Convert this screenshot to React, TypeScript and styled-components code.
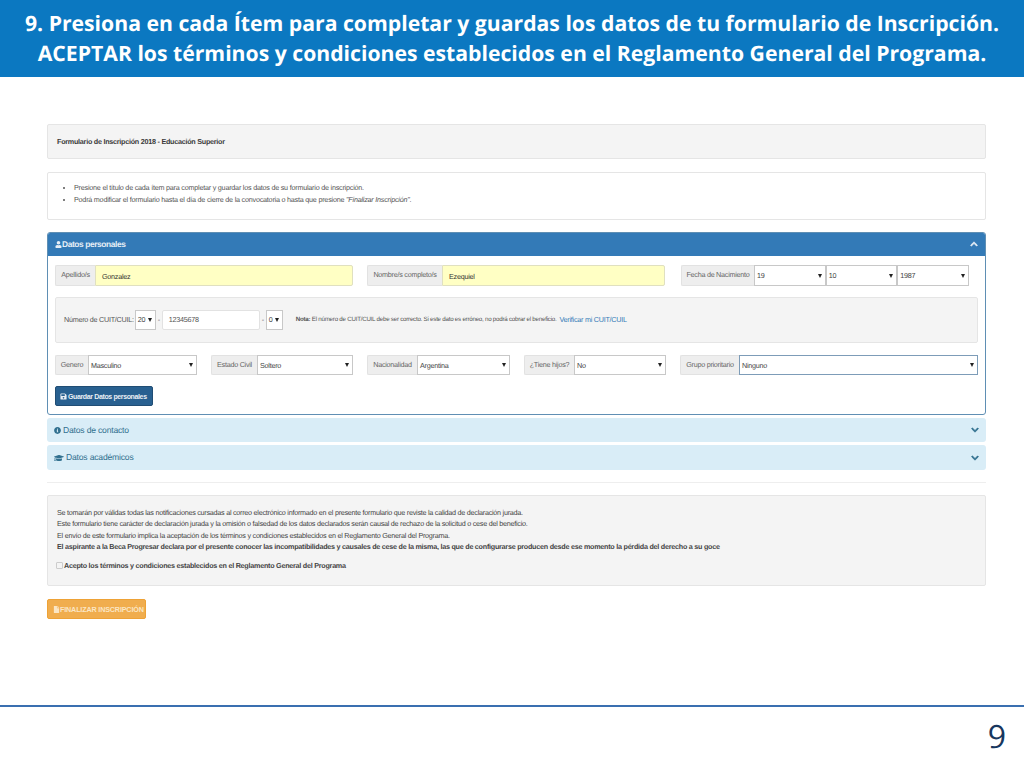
import React from "react";
import styled, { createGlobalStyle } from "styled-components";
import { FaUser, FaInfoCircle, FaGraduationCap, FaChevronUp, FaChevronDown, FaSave, FaFile } from "react-icons/fa";

const GlobalStyle = createGlobalStyle`
  html, body {
    margin: 0;
    padding: 0;
    background: #fff;
    font-family: "Liberation Sans", Arial, sans-serif;
    text-rendering: geometricPrecision;
  }
`;

const Slide = styled.div`
  width: 1024px;
  height: 768px;
  display: flex;
  flex-direction: column;
  overflow: hidden;
  background: #fff;
`;

const Banner = styled.header`
  flex: none;
  height: 77px;
  background: #0b78c1;
  color: #fff;
  font-family: "Open Sans", sans-serif;
  font-weight: 700;
  font-size: 21.2px;
  line-height: 30px;
  text-align: center;
  padding-top: 9px;
  box-sizing: border-box;
  white-space: nowrap;
`;

const Page = styled.main`
  flex: 1;
  padding: 47px 38px 0 47px;
  color: #444;
  font-size: 7.2px;
  letter-spacing: -0.25px;
  line-height: 11px;
`;

const Well = styled.div<{ $h: number; $mb: number; $plain?: boolean }>`
  height: ${({ $h }) => $h}px;
  margin-bottom: ${({ $mb }) => $mb}px;
  box-sizing: border-box;
  background: ${({ $plain }) => ($plain ? "#fff" : "#f4f4f4")};
  border: 1px solid #e5e5e5;
  border-radius: 2px;
`;

const TitleWell = styled(Well)`
  display: flex;
  align-items: center;
  padding-left: 9px;
  font-weight: 700;
  color: #3a3a3a;
`;

const NoteList = styled.ul`
  margin: 0;
  padding: 9px 0 0 26px;
  color: #555;
  letter-spacing: -0.22px;
  line-height: 11.5px;
`;

const Panel = styled.section`
  height: 183px;
  box-sizing: border-box;
  border: 1px solid #5f8fb4;
  border-radius: 3px;
  margin: -1px 0 3px;
  overflow: hidden;
`;

const PanelHead = styled.div`
  height: 23px;
  background: #337ab7;
  color: #e6eef6;
  display: flex;
  align-items: center;
  justify-content: space-between;
  padding: 0 7px 1px 7px;
  box-sizing: border-box;
  font-size: 8.4px;
  letter-spacing: -0.4px;
  font-weight: 700;
`;

const HeadLabel = styled.span<{ $gap?: number }>`
  display: flex;
  align-items: center;
  gap: ${({ $gap }) => $gap ?? 2}px;
  white-space: nowrap;
`;

const PanelBody = styled.div`
  padding: 9px 7px 0;
`;

const FieldRow = styled.div<{ $cols: string; $mb: number }>`
  display: grid;
  grid-template-columns: ${({ $cols }) => $cols};
  column-gap: 14px;
  margin-bottom: ${({ $mb }) => $mb}px;
`;

const Group = styled.div<{ $h: number; $mr?: number }>`
  display: flex;
  height: ${({ $h }) => $h}px;
  margin-right: ${({ $mr }) => $mr ?? 0}px;
  min-width: 0;
`;

const Addon = styled.span<{ $w: number }>`
  flex: none;
  width: ${({ $w }) => $w}px;
  box-sizing: border-box;
  background: #eee;
  border: 1px solid #e2e2e2;
  border-right: 0;
  border-radius: 2px 0 0 2px;
  color: #666;
  white-space: nowrap;
  display: flex;
  align-items: center;
  justify-content: center;
  padding-bottom: 2px;
`;

const YellowInput = styled.div`
  flex: 1;
  box-sizing: border-box;
  background: #ffffc4;
  border: 1px solid #e0e0c0;
  border-radius: 0 2px 2px 0;
  color: #333;
  display: flex;
  align-items: center;
  padding: 2px 0 0 6px;
`;

const SelectBox = styled.div<{ $focus?: boolean }>`
  flex: 1;
  min-width: 0;
  height: 100%;
  box-sizing: border-box;
  background: #fff;
  border: 1px solid ${({ $focus }) => ($focus ? "#7d9cb8" : "#c8c8c8")};
  display: flex;
  align-items: center;
  justify-content: space-between;
  padding: 0 3px 0 2px;
  color: #444;
`;

const Caret = styled.span`
  flex: none;
  width: 0;
  height: 0;
  border-left: 2px solid transparent;
  border-right: 2px solid transparent;
  border-top: 4px solid #222;
`;

const CuitWell = styled(Well)`
  display: flex;
  align-items: center;
  padding: 0 0 1px 8px;
  color: #555;
`;

const CuitLabel = styled.span`
  margin-right: 1px;
  white-space: nowrap;
`;

const Small = styled.div<{ $w: number }>`
  width: ${({ $w }) => $w}px;
  height: 20px;
  display: flex;
`;

const Dash = styled.span`
  width: 6px;
  text-align: center;
`;

const TextBox = styled.div`
  width: 98px;
  height: 20px;
  box-sizing: border-box;
  background: #fff;
  border: 1px solid #e2e2e2;
  border-radius: 2px;
  padding-left: 6px;
  display: flex;
  align-items: center;
  color: #555;
`;

const Note = styled.span`
  margin-left: 13px;
  font-size: 6.2px;
  letter-spacing: -0.24px;
  color: #555;
  white-space: nowrap;
`;

const VerifyLink = styled.span`
  color: #337ab7;
  margin-left: 3px;
  white-space: nowrap;
`;

const SaveButton = styled.button`
  display: flex;
  align-items: center;
  gap: 1px;
  width: 98px;
  height: 20px;
  padding: 0 0 0 4px;
  background: #286090;
  border: 1px solid #204d74;
  border-radius: 2px;
  color: #e8eef4;
  font-family: inherit;
  font-size: 7px;
  letter-spacing: -0.37px;
  font-weight: 700;
  white-space: nowrap;
`;

const Collapsed = styled.div<{ $h: number }>`
  height: ${({ $h }) => $h}px;
  margin-bottom: 3px;
  background: #d9edf7;
  border-radius: 3px;
  color: #31708f;
  display: flex;
  align-items: center;
  justify-content: space-between;
  padding: 0 7px;
  box-sizing: border-box;
  font-size: 8.6px;
  letter-spacing: -0.2px;
`;

const Rule = styled.hr`
  border: 0;
  border-top: 1px solid #eee;
  margin: 12px 0 12px;
`;

const TermsWell = styled(Well)`
  padding: 11px 9px 0;
  line-height: 11.3px;
  color: #444;
`;

const Strong = styled.div`
  font-weight: 700;
`;

const CheckRow = styled.label`
  display: flex;
  align-items: center;
  gap: 1px;
  margin: 8px 0 0 -1px;
  font-weight: 700;
`;

const Check = styled.span`
  width: 5px;
  height: 5px;
  background: #f4f4f4;
  border: 1px solid #ccc;
  border-radius: 1px;
`;

const FinishButton = styled.button`
  display: flex;
  align-items: center;
  width: 99px;
  height: 20px;
  margin-top: 13px;
  padding: 0 0 0 5px;
  background: #f0ad4e;
  border: 1px solid #eea236;
  border-radius: 2px;
  color: #fbe6c4;
  font-family: inherit;
  font-size: 7.2px;
  letter-spacing: -0.16px;
  font-weight: 700;
  white-space: nowrap;

  svg {
    flex: none;
  }
`;

const Footer = styled.footer`
  flex: none;
  height: 63px;
  border-top: 2px solid #3a6fb0;
  box-sizing: border-box;
  display: flex;
  justify-content: flex-end;
  padding: 8px 18px 0 0;
  font-family: "Open Sans", sans-serif;
  font-size: 32px;
  line-height: 44px;
  color: #17375e;
`;

const Dropdown = ({ value, focus }: { value: string; focus?: boolean }) => (
  <SelectBox $focus={focus}>
    {value}
    <Caret />
  </SelectBox>
);

export default function App() {
  return (
    <Slide>
      <GlobalStyle />
      <Banner>
        9. Presiona en cada Ítem para completar y guardas los datos de tu formulario de Inscripción.
        <br />
        ACEPTAR los términos y condiciones establecidos en el Reglamento General del Programa.
      </Banner>
      <Page>
        <TitleWell $h={35} $mb={13}>Formulario de Inscripción 2018 - Educación Superior</TitleWell>
        <Well $h={48} $mb={13} $plain>
          <NoteList>
            <li>Presione el título de cada ítem para completar y guardar los datos de su formulario de inscripción.</li>
            <li>
              Podrá modificar el formulario hasta el día de cierre de la convocatoria o hasta que presione <em>"Finalizar Inscripción"</em>.
            </li>
          </NoteList>
        </Well>
        <Panel>
          <PanelHead>
            <HeadLabel $gap={0}><FaUser size={7} />Datos personales</HeadLabel>
            <FaChevronUp size={8} stroke="currentColor" strokeWidth={40} />
          </PanelHead>
          <PanelBody>
            <FieldRow $cols="298px 300px 288px" $mb={11}>
              <Group $h={21}>
                <Addon $w={40}>Apellido/s</Addon>
                <YellowInput>Gonzalez</YellowInput>
              </Group>
              <Group $h={21} $mr={2}>
                <Addon $w={75}>Nombre/s completo/s</Addon>
                <YellowInput>Ezequiel</YellowInput>
              </Group>
              <Group $h={21}>
                <Addon $w={73}>Fecha de Nacimiento</Addon>
                <Dropdown value="19" />
                <Dropdown value="10" />
                <Dropdown value="1987" />
              </Group>
            </FieldRow>
            <CuitWell $h={46} $mb={12}>
              <CuitLabel>Número de CUIT/CUIL:</CuitLabel>
              <Small $w={21}><Dropdown value="20" /></Small>
              <Dash>-</Dash>
              <TextBox>12345678</TextBox>
              <Dash>-</Dash>
              <Small $w={17}><Dropdown value="0" /></Small>
              <Note>
                <b>Nota:</b> El número de CUIT/CUIL debe ser correcto. Si este dato es erróneo, no podrá cobrar el beneficio.
              </Note>
              <VerifyLink>Verificar mi CUIT/CUIL</VerifyLink>
            </CuitWell>
            <FieldRow $cols="142px 142px 143px 142px 298px" $mb={11}>
              <Group $h={20}>
                <Addon $w={33}>Genero</Addon>
                <Dropdown value="Masculino" />
              </Group>
              <Group $h={20}>
                <Addon $w={46}>Estado Civil</Addon>
                <Dropdown value="Soltero" />
              </Group>
              <Group $h={20}>
                <Addon $w={50}>Nacionalidad</Addon>
                <Dropdown value="Argentina" />
              </Group>
              <Group $h={20}>
                <Addon $w={50}>¿Tiene hijos?</Addon>
                <Dropdown value="No" />
              </Group>
              <Group $h={20}>
                <Addon $w={59}>Grupo prioritario</Addon>
                <Dropdown value="Ninguno" focus />
              </Group>
            </FieldRow>
            <SaveButton><FaSave size={7} />Guardar Datos personales</SaveButton>
          </PanelBody>
        </Panel>
        <Collapsed $h={24}>
          <HeadLabel><FaInfoCircle size={7} />Datos de contacto</HeadLabel>
          <FaChevronDown size={8} stroke="currentColor" strokeWidth={40} />
        </Collapsed>
        <Collapsed $h={25}>
          <HeadLabel><FaGraduationCap size={10} />Datos académicos</HeadLabel>
          <FaChevronDown size={8} stroke="currentColor" strokeWidth={40} />
        </Collapsed>
        <Rule />
        <TermsWell $h={91} $mb={0}>
          <div>Se tomarán por válidas todas las notificaciones cursadas al correo electrónico informado en el presente formulario que reviste la calidad de declaración jurada.</div>
          <div>Este formulario tiene carácter de declaración jurada y la omisión o falsedad de los datos declarados serán causal de rechazo de la solicitud o cese del beneficio.</div>
          <div>El envío de este formulario implica la aceptación de los términos y condiciones establecidos en el Reglamento General del Programa.</div>
          <Strong>El aspirante a la Beca Progresar declara por el presente conocer las incompatibilidades y causales de cese de la misma, las que de configurarse producen desde ese momento la pérdida del derecho a su goce</Strong>
          <CheckRow><Check />Acepto los términos y condiciones establecidos en el Reglamento General del Programa</CheckRow>
        </TermsWell>
        <FinishButton><FaFile size={7} />FINALIZAR INSCRIPCIÓN</FinishButton>
      </Page>
      <Footer>9</Footer>
    </Slide>
  );
}
